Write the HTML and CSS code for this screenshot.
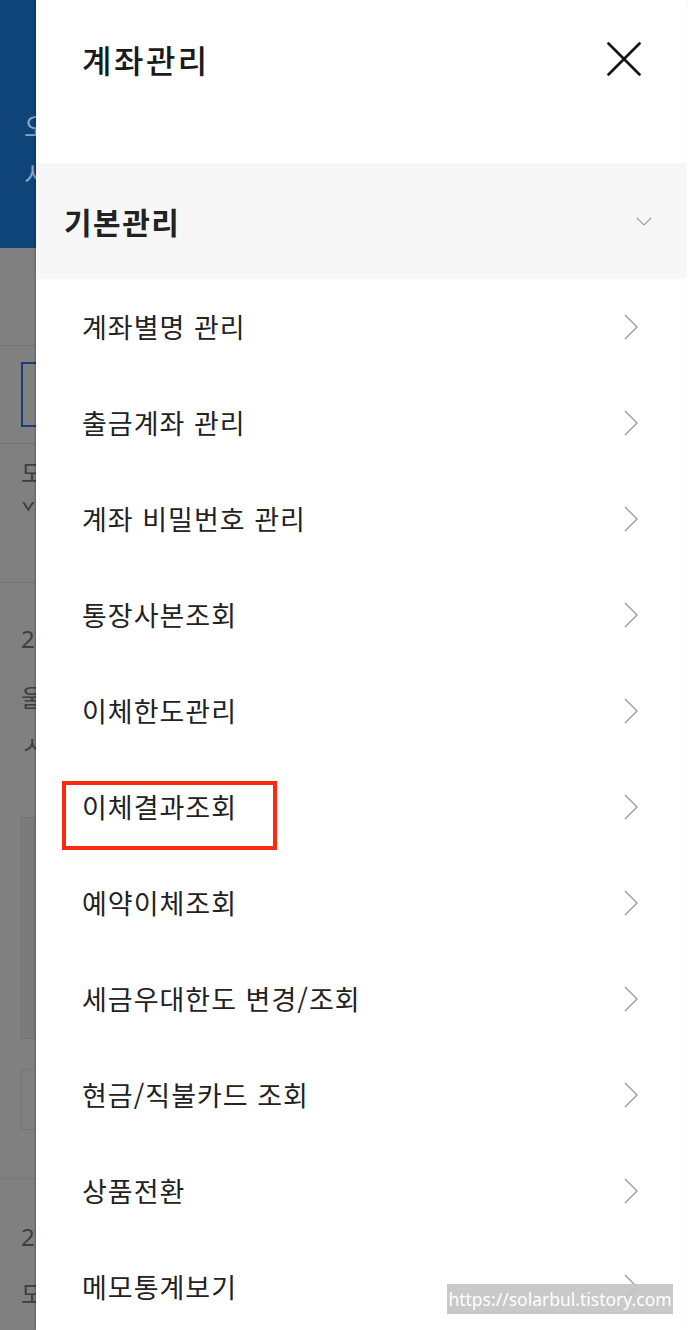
FILE: index.html
```html
<!DOCTYPE html>
<html lang="ko">
<head>
<meta charset="utf-8">
<title>계좌관리</title>
<link rel="stylesheet" href="styles.css">
</head>
<body>
<div class="page">
  <div class="under">
    <div class="under-top">
      <span class="ut-a">오</span>
      <span class="ut-b">시</span>
    </div>
    <div class="under-band"></div>
    <div class="under-box-blue"></div>
    <div class="under-line l1"></div>
    <div class="under-txt t1">도</div>
    <div class="under-txt t2">ˇ</div>
    <div class="under-line l2"></div>
    <div class="under-txt t3">2</div>
    <div class="under-txt t4">울</div>
    <div class="under-txt t5">ㅅ</div>
    <div class="under-box b1"></div>
    <div class="under-box b2"></div>
    <div class="under-line l3"></div>
    <div class="under-txt t6">2</div>
    <div class="under-txt t7">도</div>
  </div>

  <div class="drawer">
    <div class="drawer-head">
      <h1 class="drawer-title">계좌관리</h1>
      <svg class="close" viewBox="0 0 34 34" width="34" height="34" aria-label="닫기">
        <path d="M1.5 1.5 L32.5 32.5 M32.5 1.5 L1.5 32.5" stroke="#111" stroke-width="2.6" stroke-linecap="round" fill="none"/>
      </svg>
    </div>

    <div class="section">
      <span class="section-title">기본관리</span>
      <svg class="chev-down" viewBox="0 0 16 9" width="16" height="9">
        <path d="M0.8 0.8 L8 8 L15.2 0.8" stroke="#9a9a9a" stroke-width="1.2" fill="none"/>
      </svg>
    </div>

    <ul class="menu">
      <li class="item"><span>계좌별명 관리</span><svg class="chev" viewBox="0 0 14 26" width="14" height="26"><path d="M1 1 L13 13 L1 25" stroke="#9a9a9a" stroke-width="1.3" fill="none"/></svg></li>
      <li class="item"><span>출금계좌 관리</span><svg class="chev" viewBox="0 0 14 26" width="14" height="26"><path d="M1 1 L13 13 L1 25" stroke="#9a9a9a" stroke-width="1.3" fill="none"/></svg></li>
      <li class="item"><span>계좌 비밀번호 관리</span><svg class="chev" viewBox="0 0 14 26" width="14" height="26"><path d="M1 1 L13 13 L1 25" stroke="#9a9a9a" stroke-width="1.3" fill="none"/></svg></li>
      <li class="item"><span>통장사본조회</span><svg class="chev" viewBox="0 0 14 26" width="14" height="26"><path d="M1 1 L13 13 L1 25" stroke="#9a9a9a" stroke-width="1.3" fill="none"/></svg></li>
      <li class="item"><span>이체한도관리</span><svg class="chev" viewBox="0 0 14 26" width="14" height="26"><path d="M1 1 L13 13 L1 25" stroke="#9a9a9a" stroke-width="1.3" fill="none"/></svg></li>
      <li class="item"><span>이체결과조회</span><svg class="chev" viewBox="0 0 14 26" width="14" height="26"><path d="M1 1 L13 13 L1 25" stroke="#9a9a9a" stroke-width="1.3" fill="none"/></svg></li>
      <li class="item"><span>예약이체조회</span><svg class="chev" viewBox="0 0 14 26" width="14" height="26"><path d="M1 1 L13 13 L1 25" stroke="#9a9a9a" stroke-width="1.3" fill="none"/></svg></li>
      <li class="item"><span>세금우대한도 변경/조회</span><svg class="chev" viewBox="0 0 14 26" width="14" height="26"><path d="M1 1 L13 13 L1 25" stroke="#9a9a9a" stroke-width="1.3" fill="none"/></svg></li>
      <li class="item"><span>현금/직불카드 조회</span><svg class="chev" viewBox="0 0 14 26" width="14" height="26"><path d="M1 1 L13 13 L1 25" stroke="#9a9a9a" stroke-width="1.3" fill="none"/></svg></li>
      <li class="item"><span>상품전환</span><svg class="chev" viewBox="0 0 14 26" width="14" height="26"><path d="M1 1 L13 13 L1 25" stroke="#9a9a9a" stroke-width="1.3" fill="none"/></svg></li>
      <li class="item"><span>메모통계보기</span><svg class="chev" viewBox="0 0 14 26" width="14" height="26"><path d="M1 1 L13 13 L1 25" stroke="#9a9a9a" stroke-width="1.3" fill="none"/></svg></li>
    </ul>
  </div>

  <div class="spacer"></div>

  <div class="highlight"></div>
  <div class="watermark">https://solarbul.tistory.com</div>
</div>
</body>
</html>
```

FILE: styles.css
```css
* { box-sizing: border-box; }
html, body {
  margin: 0;
  padding: 0;
  background: #fff;
}
body {
  width: 696px;
  height: 1330px;
  overflow: hidden;
  font-family: "Noto Sans CJK KR", "Noto Sans", sans-serif;
}
.page {
  position: relative;
  display: flex;
  width: 696px;
  height: 1330px;
  overflow: hidden;
}

/* dimmed page underneath */
.under {
  width: 36px;
  flex: 0 0 36px;
  height: 1330px;
  background: #808080;
  overflow: hidden;
  display: flex;
  flex-direction: column;
}
.under-top {
  height: 248px;
  flex: 0 0 248px;
  background: #0e4478;
  display: flex;
  flex-direction: column;
  padding: 112px 0 0 24px;
  gap: 20px;
  color: #8aa2c2;
  font-size: 26px;
  line-height: 28px;
  white-space: nowrap;
}
.under-band {
  height: 98px;
  flex: 0 0 98px;
  border-bottom: 1px solid #747474;
}
.under-box-blue {
  margin: 16px 0 0 21px;
  height: 65px;
  flex: 0 0 65px;
  border: 2px solid #173f7c;
  border-right: none;
}
.under-line {
  flex: 0 0 1px;
  height: 1px;
  background: #747474;
}
.under-line.l1 { margin-top: 16px; }
.under-line.l2 { margin-top: 16px; }
.under-line.l3 { margin-top: 48px; }
.under-txt {
  padding-left: 21px;
  color: #3e3e3e;
  font-size: 24px;
  line-height: 28px;
  white-space: nowrap;
  flex: 0 0 auto;
}
.t1 { margin-top: 14px; }
.t2 { margin-top: 12px; height: 68px; }
.t3 { margin-top: 42px; font-family: "Noto Sans", sans-serif; }
.t4 { margin-top: 30px; }
.t5 { margin-top: 19px; }
.under-box {
  margin-left: 21px;
  border: 1px solid #757575;
  border-right: none;
  flex: 0 0 auto;
}
.b1 {
  margin-top: 59px;
  height: 222px;
  background: #7b7b7b;
}
.b2 {
  margin-top: 30px;
  height: 61px;
  background: #808080;
}
.t6 { margin-top: 44px; font-family: "Noto Sans", sans-serif; }
.t7 { margin-top: 28px; }

/* drawer */
.drawer {
  width: 650px;
  flex: 0 0 650px;
  height: 1330px;
  background: #fff;
  box-shadow: -1px 0 2px rgba(0,0,0,0.25);
  position: relative;
  z-index: 1;
}
.drawer-head {
  height: 163px;
  display: flex;
  justify-content: space-between;
  align-items: flex-start;
  padding: 36px 45px 0 46px;
}
.drawer-title {
  margin: 0;
  font-size: 32px;
  font-weight: 500;
  line-height: 46px;
  color: #1a1a1a;
  letter-spacing: 2.5px;
}
.close {
  display: block;
  margin-top: 6px;
}
.section {
  height: 116px;
  background: #f7f7f7;
  display: flex;
  align-items: center;
  justify-content: space-between;
  padding: 0 34px 0 28px;
}
.section-title {
  font-size: 30px;
  font-weight: 700;
  color: #222;
  line-height: 40px;
  letter-spacing: 1.5px;
}
.chev-down { display: block; }

.menu {
  list-style: none;
  margin: 0;
  padding: 0;
}
.item {
  height: 96px;
  display: flex;
  align-items: center;
  justify-content: space-between;
  padding: 0 48px 0 46px;
  font-size: 27px;
  color: #222;
  line-height: 36px;
  letter-spacing: 1px;
}
.chev { display: block; }

.spacer {
  flex: 1 1 auto;
  background: #fff;
}

/* overlays */
.highlight {
  position: absolute;
  left: 62px;
  top: 781px;
  width: 215px;
  height: 69px;
  border: 4px solid #ff2a0e;
  z-index: 2;
}
.watermark {
  position: absolute;
  left: 447px;
  top: 1284px;
  width: 226px;
  height: 30px;
  background: rgba(196,196,196,0.92);
  color: #fff;
  font-family: "Noto Sans", sans-serif;
  font-size: 17.5px;
  line-height: 30px;
  text-align: center;
  white-space: nowrap;
  z-index: 3;
}
```
